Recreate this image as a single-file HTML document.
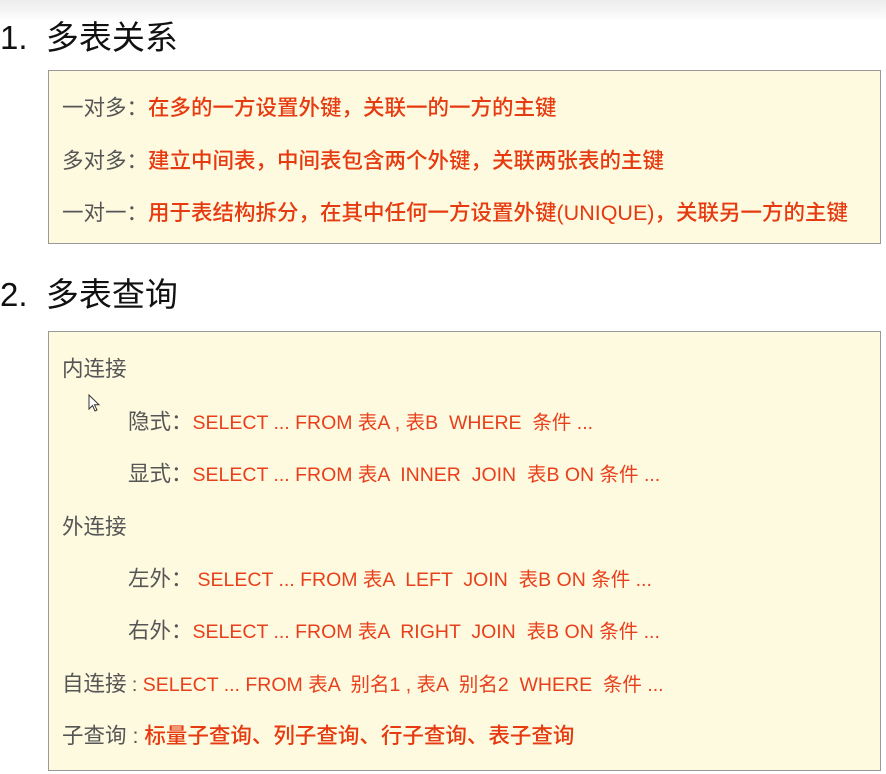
<!DOCTYPE html>
<html><head><meta charset="utf-8"><style>
body{margin:0;width:886px;height:774px;overflow:hidden;background:#fff;font-family:"Liberation Sans","Noto Sans CJK SC",sans-serif;position:relative}
.top{position:absolute;left:0;top:0;width:886px;height:22px;background:linear-gradient(#ececec,#fff)}
h1{position:absolute;left:0;margin:0;font-weight:normal;font-size:33px;color:#111;line-height:40px;white-space:pre}
.box{position:absolute;left:48px;width:833px;background:#fefae0;border:1px solid #999;box-sizing:border-box}
.l{position:absolute;font-size:19.5px;line-height:28px;color:#555;white-space:pre}
.c{font-size:21.5px}
.r{color:#e8401c}
.b{color:#e63a10;font-weight:500}
</style></head><body>
<div class="top"></div>
<h1 style="top:18px">1.  多表关系</h1>
<div class="box" style="top:70px;height:174px"></div>
<div class="l c" style="left:62px;top:94px">一对多：<span class="b">在多的一方设置外键，关联一的一方的主键</span></div>
<div class="l c" style="left:62px;top:147px">多对多：<span class="b">建立中间表，中间表包含两个外键，关联两张表的主键</span></div>
<div class="l c" style="left:62px;top:199px">一对一：<span class="b">用于表结构拆分，在其中任何一方设置外键(UNIQUE)，关联另一方的主键</span></div>
<h1 style="top:275px">2.  多表查询</h1>
<div class="box" style="top:331px;height:440px"></div>
<div class="l c" style="left:62px;top:355px">内连接</div>
<div class="l" style="left:128px;top:408px"><span class="c">隐式：</span><span class="r">SELECT ... FROM 表A , 表B  WHERE  条件 ...</span></div>
<div class="l" style="left:128px;top:460px"><span class="c">显式：</span><span class="r">SELECT ... FROM 表A  INNER  JOIN  表B ON 条件 ...</span></div>
<div class="l c" style="left:62px;top:513px">外连接</div>
<div class="l" style="left:128px;top:565px"><span class="c">左外：</span><span class="r" style="margin-left:5px">SELECT ... FROM 表A  LEFT  JOIN  表B ON 条件 ...</span></div>
<div class="l" style="left:128px;top:617px"><span class="c">右外：</span><span class="r">SELECT ... FROM 表A  RIGHT  JOIN  表B ON 条件 ...</span></div>
<div class="l" style="left:62px;top:670px"><span class="c">自连接</span> : <span class="r">SELECT ... FROM 表A  别名1 , 表A  别名2  WHERE  条件 ...</span></div>
<div class="l c" style="left:62px;top:722px">子查询 : <span class="b">标量子查询、列子查询、行子查询、表子查询</span></div>
<svg style="position:absolute;left:88px;top:394px" width="14" height="20" viewBox="0 0 14 20"><path d="M1 1 L1 15 L4.5 11.5 L7 17 L9 16 L6.5 10.8 L11 10.8 Z" fill="#fff" stroke="#333" stroke-width="1"/></svg>
</body></html>
